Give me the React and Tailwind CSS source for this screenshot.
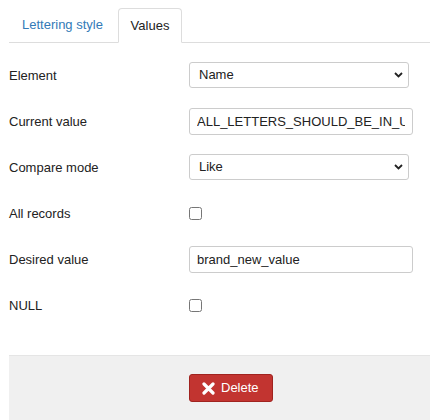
import { useState } from "react";

const font = { fontFamily: '"Liberation Sans", Arial, sans-serif' };

function Chevron() {
  return (
    <svg width="9" height="6" viewBox="0 0 9 6" className="absolute right-[6px] top-1/2 -translate-y-1/2 pointer-events-none">
      <path d="M1 1 L4.5 4.5 L8 1" fill="none" stroke="#222" strokeWidth="1.8" />
    </svg>
  );
}

function Row({ label, children }) {
  return (
    <div className="flex items-center h-[46px]">
      <div className="w-[180px] text-[13px] text-[#222] pt-px">{label}</div>
      <div className="flex-1 flex items-center">{children}</div>
    </div>
  );
}

function Select({ value, options }) {
  return (
    <div className="relative w-[220px]">
      <select
        defaultValue={value}
        className="appearance-none w-full h-[26px] border border-[#ccc] rounded-[3px] bg-white pl-[9px] text-[13px] text-[#222] outline-none"
        style={font}
      >
        {options.map((o) => (
          <option key={o}>{o}</option>
        ))}
      </select>
      <Chevron />
    </div>
  );
}

function TextInput({ value }) {
  return (
    <input
      type="text"
      defaultValue={value}
      className="w-[224px] h-[27px] border border-[#ccc] rounded-[3px] bg-white px-[7px] text-[13px] text-[#222] outline-none"
      style={font}
    />
  );
}

function Check() {
  return <input type="checkbox" className="w-[13px] h-[13px] m-0" />;
}

export default function App() {
  const [tab] = useState("values");

  return (
    <div className="w-[430px] h-[420px] bg-white overflow-hidden" style={font}>
      <div className="pl-[9px] pt-[8px]">
        <div className="flex border-b border-[#ddd] h-[35px]">
          <div className="w-[109px] pl-[13px] flex items-center text-[13px] text-[#337ab7] cursor-pointer">
            Lettering style
          </div>
          <div
            className={`w-[64px] justify-center flex items-center text-[13px] text-[#222] border border-[#ddd] border-b-white rounded-t-[4px] -mb-px bg-white ${
              tab === "values" ? "" : ""
            }`}
          >
            Values
          </div>
        </div>

        <div className="pt-[9px]">
          <Row label="Element">
            <Select value="Name" options={["Name", "Code", "Description"]} />
          </Row>
          <Row label="Current value">
            <TextInput value="ALL_LETTERS_SHOULD_BE_IN_UPPERCASE" />
          </Row>
          <Row label="Compare mode">
            <Select value="Like" options={["Like", "Equal", "Not equal"]} />
          </Row>
          <Row label="All records">
            <Check />
          </Row>
          <Row label="Desired value">
            <TextInput value="brand_new_value" />
          </Row>
          <Row label="NULL">
            <Check />
          </Row>
        </div>

        <div className="mt-[27px] h-[70px] bg-[#f0f0f0] border-t border-[#e5e5e5] pl-[180px] pt-[18px]">
          <button className="flex items-center gap-[6px] h-[28px] w-[84px] pl-[12px] bg-[#c23430] border border-[#a0231f] rounded-[3px] text-white text-[13px]">
            <svg width="13" height="13" viewBox="0 0 13 13">
              <path d="M2 2 L11 11 M11 2 L2 11" stroke="#fff" strokeWidth="3.2" strokeLinecap="round" />
            </svg>
            Delete
          </button>
        </div>
      </div>
    </div>
  );
}
